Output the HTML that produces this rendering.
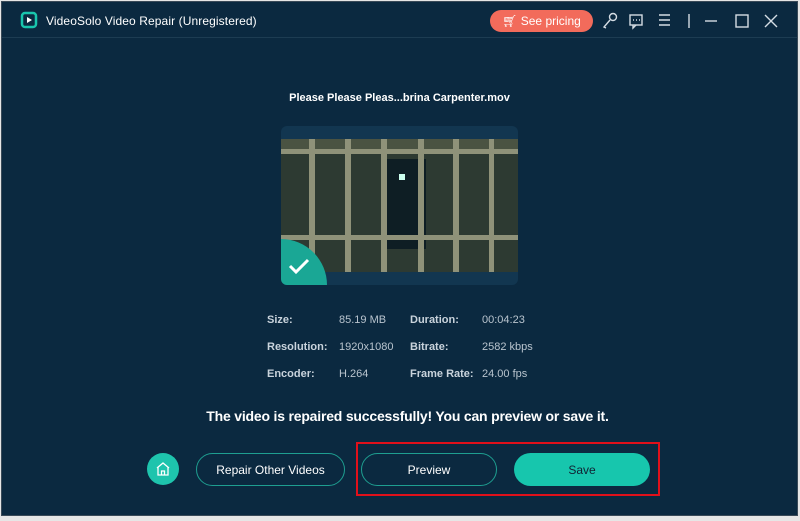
<!DOCTYPE html>
<html><head><style>
body{margin:0;width:800px;height:521px;background:#e6e6e6;font-family:"Liberation Sans",sans-serif;overflow:hidden;position:relative}
.win{position:absolute;left:1px;top:1px;width:797px;height:515px;background:#0b2940;border:1px solid #3a4a58;box-sizing:border-box}
.t{position:absolute;color:#fff;white-space:nowrap}
.lbl{position:absolute;color:#c9d3dc;font-size:11px;font-weight:bold}
.val{position:absolute;color:#b9c4ce;font-size:11px}
.btn{position:absolute;top:451px;height:33px;border-radius:17px;box-sizing:border-box;color:#fff;font-size:12px;display:flex;align-items:center;justify-content:center}
</style></head><body>
<div class="win">
<div style="position:absolute;left:0;top:35px;width:100%;height:1px;background:#1d3c52"></div>
<svg style="position:absolute;left:18px;top:9px" width="18" height="18" viewBox="0 0 18 18"><rect x="2" y="2" width="14" height="14" rx="3" fill="none" stroke="#19c5ad" stroke-width="2.5"/><path d="M7 6l5 3-5 3z" fill="#fff"/></svg>
<div class="t" style="left:44px;top:12px;font-size:12px;letter-spacing:0.1px">VideoSolo Video Repair (Unregistered)</div>
<div style="position:absolute;left:488px;top:8px;width:103px;height:22px;border-radius:11px;background:#f26b5b;color:#fff;font-size:12px;display:flex;align-items:center;justify-content:center">🛒︎&nbsp;See pricing</div>
<svg style="position:absolute;left:598px;top:10px" width="160" height="18" viewBox="0 0 160 18" fill="none" stroke="#d5dde4" stroke-width="1.4">
<circle cx="13" cy="5" r="3.5"/><path d="M10 8l-6 7 2 1"/>
<rect x="30" y="3" width="12" height="10"/><path d="M33 13v3l3-3"/><path d="M33 8h1M36 8h1M39 8h1"/>
<path d="M59 3h11M59 8h11M59 13h11"/>
<path d="M89 2v14"/>
<path d="M105 9h12"/>
<rect x="136" y="3" width="12" height="12"/>
</svg>
<svg style="position:absolute;left:762px;top:12px" width="14" height="14" fill="none" stroke="#d5dde4" stroke-width="1.4"><path d="M1 1l12 12M13 1L1 13"/></svg>
<div class="t" style="left:0;width:795px;text-align:center;top:90px;font-size:11px;font-weight:bold">Please Please Pleas...brina Carpenter.mov</div>
<div style="position:absolute;left:279px;top:124px;width:237px;height:159px;background:#123650;border-radius:6px;overflow:hidden">
<svg width="237" height="133" style="position:absolute;left:0;top:13px" viewBox="0 0 237 133">
<rect width="237" height="133" fill="#2d3a32"/>
<rect x="100" y="20" width="45" height="90" fill="#0e1e24"/>
<rect x="118" y="35" width="6" height="6" fill="#cfe"/>
<rect x="0" y="0" width="237" height="14" fill="#4a5342"/>
<g fill="#8f9279"><rect x="0" y="10" width="237" height="5"/><rect x="0" y="96" width="237" height="5"/>
<rect x="28" y="0" width="6" height="133"/><rect x="64" y="0" width="6" height="133"/><rect x="100" y="0" width="6" height="133"/><rect x="137" y="0" width="6" height="133"/><rect x="172" y="0" width="6" height="133"/><rect x="208" y="0" width="5" height="133"/></g>
</svg>
<div style="position:absolute;left:-46px;bottom:-46px;width:92px;height:92px;border-radius:50%;background:#1aa795"></div>
<svg style="position:absolute;left:7px;top:131px" width="22" height="18" fill="none" stroke="#fff" stroke-width="3"><path d="M2 9l6 6L20 3"/></svg>
</div>
<div class="lbl" style="left:265px;top:312px">Size:</div><div class="val" style="left:337px;top:312px">85.19 MB</div>
<div class="lbl" style="left:408px;top:312px">Duration:</div><div class="val" style="left:480px;top:312px">00:04:23</div>
<div class="lbl" style="left:265px;top:339px">Resolution:</div><div class="val" style="left:337px;top:339px">1920x1080</div>
<div class="lbl" style="left:408px;top:339px">Bitrate:</div><div class="val" style="left:480px;top:339px">2582 kbps</div>
<div class="lbl" style="left:265px;top:366px">Encoder:</div><div class="val" style="left:337px;top:366px">H.264</div>
<div class="lbl" style="left:408px;top:366px">Frame Rate:</div><div class="val" style="left:480px;top:366px">24.00 fps</div>
<div class="t" style="left:0;width:811px;text-align:center;top:406px;font-size:14px;font-weight:bold;letter-spacing:-0.2px">The video is repaired successfully! You can preview or save it.</div>
<div style="position:absolute;left:145px;top:451px;width:32px;height:32px;border-radius:50%;background:#1ec4ad"></div>
<svg style="position:absolute;left:153px;top:459px" width="16" height="16" fill="none" stroke="#fff" stroke-width="1.3"><path d="M2 7L8 2l6 5M3 6v8h10V6M6.5 14v-4h3v4"/></svg>
<div class="btn" style="left:194px;width:149px;border:1px solid #1e9e90">Repair Other Videos</div>
<div class="btn" style="left:359px;width:136px;border:1px solid #1e9e90">Preview</div>
<div class="btn" style="left:512px;width:136px;background:#17c6ad;color:#123">Save</div>
<div style="position:absolute;left:354px;top:440px;width:304px;height:54px;border:2px solid #e0101a;box-sizing:border-box"></div>
</div>
</body></html>
